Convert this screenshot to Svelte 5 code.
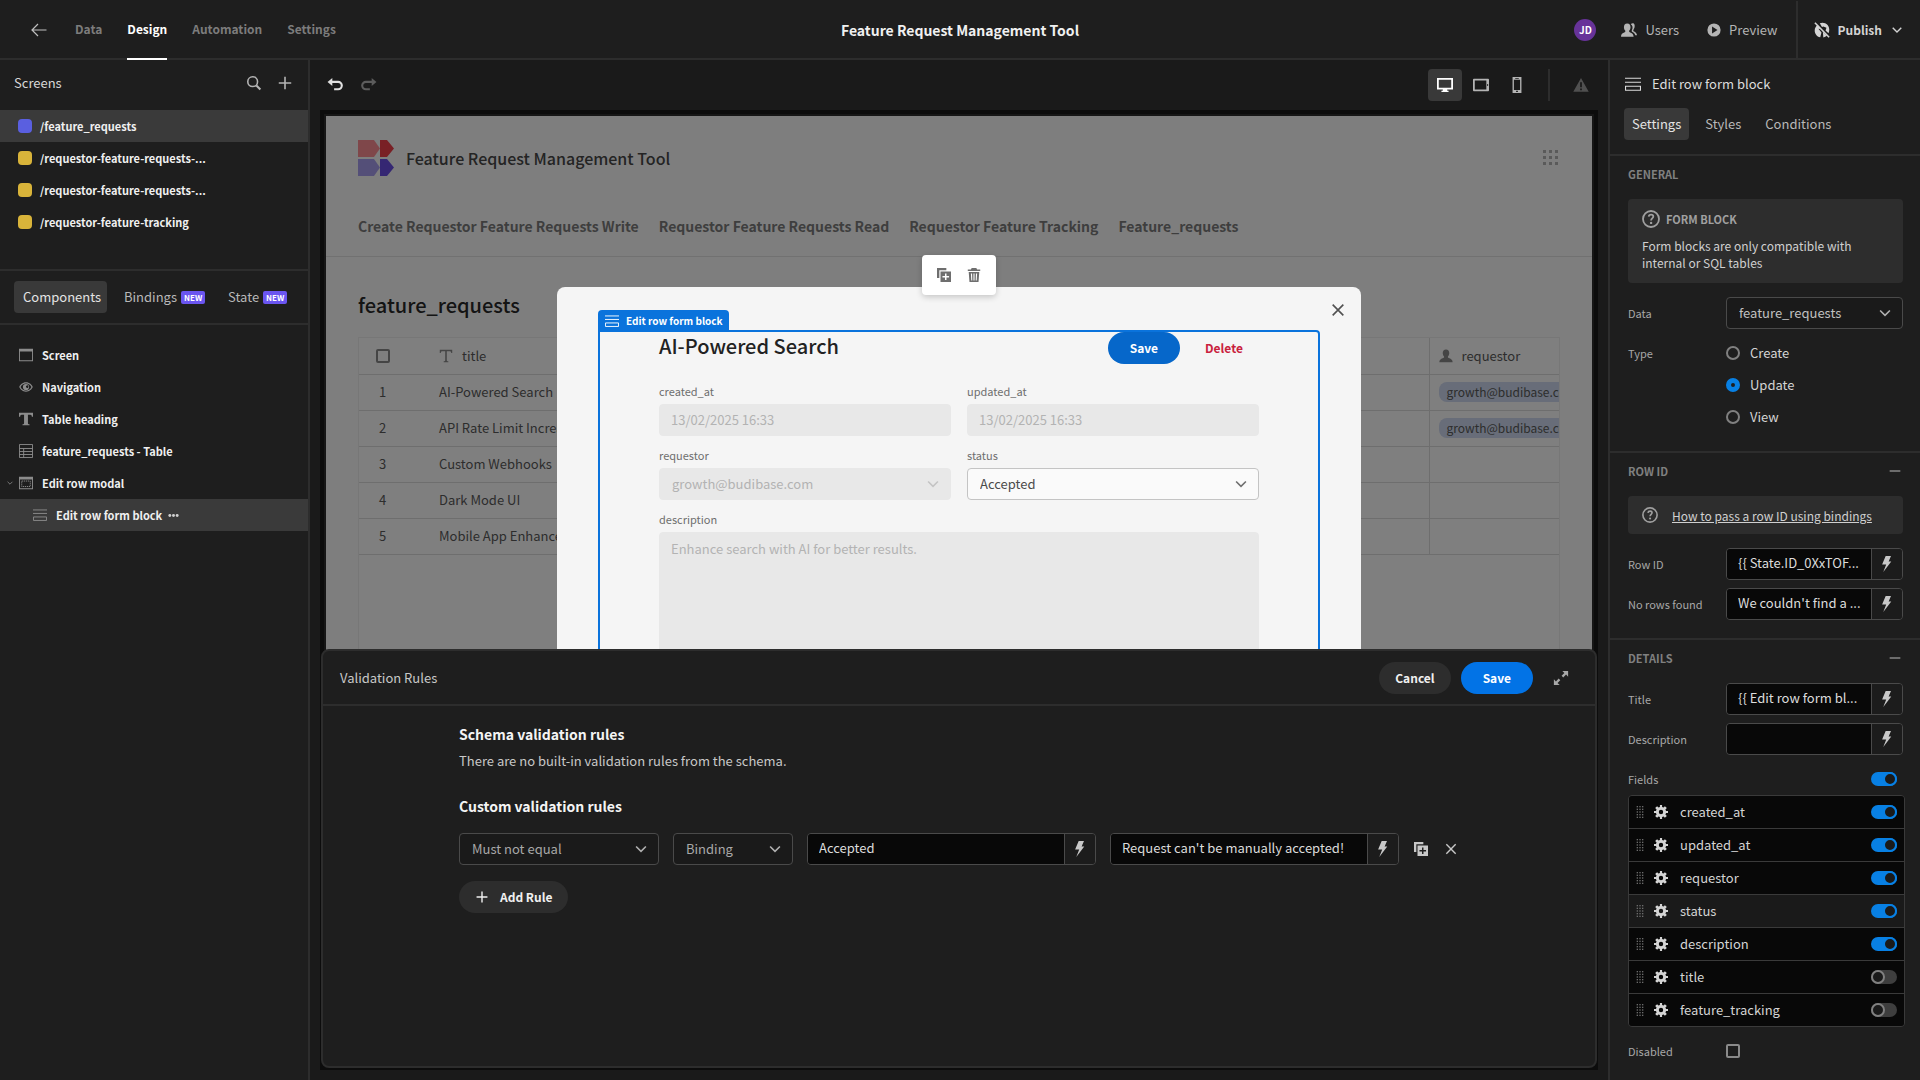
<script>
  const tabs = ["Data", "Design", "Automation", "Settings"];

  const screens = [
    { route: "/feature_requests", color: "#5a5fe0", selected: true },
    { route: "/requestor-feature-requests-...", color: "#d9b43a" },
    { route: "/requestor-feature-requests-...", color: "#d9b43a" },
    { route: "/requestor-feature-tracking", color: "#d9b43a" },
  ];

  const tree = [
    { name: "Screen", icon: "screen" },
    { name: "Navigation", icon: "eye" },
    { name: "Table heading", icon: "text" },
    { name: "feature_requests - Table", icon: "table" },
    { name: "Edit row modal", icon: "modal", open: true },
    { name: "Edit row form block", icon: "form", child: true },
  ];

  const links = [
    "Create Requestor Feature Requests Write",
    "Requestor Feature Requests Read",
    "Requestor Feature Tracking",
    "Feature_requests",
  ];

  const rows = [
    { title: "AI-Powered Search", requestor: "growth@budibase.com" },
    { title: "API Rate Limit Increase", requestor: "growth@budibase.com" },
    { title: "Custom Webhooks" },
    { title: "Dark Mode UI" },
    { title: "Mobile App Enhancements" },
  ];

  let fields = $state([
    { name: "created_at", on: true },
    { name: "updated_at", on: true },
    { name: "requestor", on: true },
    { name: "status", on: true, hover: true },
    { name: "description", on: true },
    { name: "title", on: false },
    { name: "feature_tracking", on: false },
  ]);

  let allFields = $state(true);
  let type = $state("Update");
  let rowId = $state("{{ State.ID_0XxTOF...");
  let noRows = $state("We couldn't find a ...");
  let title = $state("{{ Edit row form bl...");
  let description = $state("");
  let ruleValue = $state("Accepted");
  let ruleError = $state("Request can't be manually accepted!");
</script>

{#snippet icon(name, size = 18)}
  <svg class="icon" width={size} height={size} viewBox="0 0 18 18" aria-hidden="true">
    {#if name === "back"}
      <path class="line" d="M16.5 9H2M8 3L2 9l6 6" />
    {:else if name === "search"}
      <circle class="line thick" cx="7.5" cy="7.5" r="5.5" />
      <path class="line heavy" d="M11.7 11.7l4.5 4.5" />
    {:else if name === "plus"}
      <path class="line thick" d="M9 2v14M2 9h14" />
    {:else if name === "minus"}
      <path class="line thick" d="M3 9h12" />
    {:else if name === "close"}
      <path class="line thick" d="M3 3l12 12M15 3L3 15" />
    {:else if name === "chevron"}
      <path class="line thick" d="M3.5 6.2L9 11.7l5.500-5.500" />
    {:else if name === "undo"}
      <path d="M6 1L.6 5.500 6 10z" />
      <path class="line heavy" d="M5 5.500h7.500a3.900 3.900 0 0 1 0 8.300H8" />
    {:else if name === "redo"}
      <path d="M12 1l5.400 4.500L12 10z" />
      <path class="line heavy" d="M13 5.500H5.500a3.900 3.900 0 0 0 0 8.300H10" />
    {:else if name === "desktop"}
      <path fill-rule="evenodd" d="M0 1h18v13h-6.500v1.500H13V17H5v-1.500h1.500V14H0zM2 3v9h14V3z" />
    {:else if name === "tablet"}
      <path fill-rule="evenodd" d="M1 2h16a1 1 0 0 1 1 1v12a1 1 0 0 1-1 1H1a1 1 0 0 1-1-1V3a1 1 0 0 1 1-1zM2 4v10h13V4zM16 8v2h1V8z" />
    {:else if name === "phone"}
      <path fill-rule="evenodd" d="M4 0h10v18H4zM5.500 3v11.500h7V3zM7 1v1h4V1zM8 15.500v1.300h2v-1.300z" />
    {:else if name === "alert"}
      <path fill-rule="evenodd" d="M9 1l8.700 15.500H.3zM8 6v5.500h2V6zM8 13v2h2v-2z" />
    {:else if name === "users"}
      <path d="M11 2.600c1-1.500 2.400-1.600 3.400-.8 1.300 1 1.500 4.200-.2 6.500-.7 1-.3 1.800.5 2.300 1.500.9 3.300 1.800 3.300 4.400h-2c-.3-2-1.400-2.700-3.600-4-.5-.4-.6-.9-.2-1.600C13.800 6.300 13 3.800 11 2.600z" />
      <path d="M7 1.800c2.600 0 3.700 1.800 3.700 4 0 1.500-.6 2.900-1.400 3.800-.5.7-.2 1.500.6 1.800 2.600 1 4.100 1.700 4.300 5.100H0c0-3.400 1.600-4.100 4.200-5.100.7-.3 1-1.100.5-1.800C3.900 8.700 3.300 7.300 3.300 5.800c0-2.200 1.100-4 3.700-4z" />
    {:else if name === "user"}
      <path d="M9 .5c2.800 0 4.200 2 4.200 4.600 0 1.600-.6 3.200-1.500 4.300-.6.800-.3 1.800.6 2.100 3 1.100 5.200 1.800 5.200 5.500H.5c0-3.700 2.200-4.400 5.200-5.500.9-.3 1.200-1.300.6-2.100C5.400 8.300 4.800 6.700 4.800 5.100 4.800 2.500 6.200.5 9 .5z" />
    {:else if name === "play"}
      <path fill-rule="evenodd" d="M9 .5a8.500 8.500 0 1 0 0 17 8.500 8.500 0 0 0 0-17zM6.500 4.500l7 4.500-7 4.500z" />
    {:else if name === "globe"}
      <path d="M4 3.500L8 8l-3-.3 3.400 4L7 17.200C3 16.500.8 13 .8 9.500c0-2.200 1.200-4.500 3.200-6z" />
      <path d="M6.500 1.500C9.500.3 13 1 15.300 3.500c2.400 2.900 2.300 6.500 1 9.200L13 9.500l1-3-3.500-1.300L9 5.500z" />
      <path d="M10 11l4.500 4.500c-1.200 1-2.500 1.600-4 1.800z" />
      <path class="line thick" d="M1 .8l16 16.400" />
    {:else if name === "screen"}
      <path fill-rule="evenodd" d="M0 1h18v16H0zM1.200 4.500v11.300h15.600V4.500z" />
    {:else if name === "modal"}
      <path fill-rule="evenodd" d="M0 1h18v16H0zM1.200 4.500v11.300h15.600V4.500z" />
      <rect class="line" x="3.500" y="6.500" width="11" height="7" stroke-dasharray="1.600 1" />
    {:else if name === "eye"}
      <path fill-rule="evenodd" d="M9 3c4.500 0 7.500 3.300 8.700 6-1.200 2.700-4.200 6-8.700 6S1.500 11.700.3 9C1.500 6.300 4.500 3 9 3zm0 1.500c-1 0-5 .3-7 4.500 2 4.200 6 4.500 7 4.500s5-.3 7-4.500C14 4.800 10 4.500 9 4.500z" />
      <path fill-rule="evenodd" d="M9 5a4 4 0 1 0 0 8 4 4 0 0 0 0-8zm1 2a1.600 1.600 0 1 1-.1 3A1.600 1.600 0 0 1 10 7z" />
    {:else if name === "text"}
      <path d="M0 1h18v5h-1.500c0-1.600-.6-2.500-2-2.500H11.500v11c0 1 .6 1.300 2 1.300V17h-9v-1.200c1.400 0 2-.3 2-1.300v-11H3.500c-1.400 0-2 .9-2 2.500H0z" />
    {:else if name === "type"}
      <path d="M1 1h16v4h-1.300c0-1.500-.7-2.200-2-2.200H10v11.700c0 .9.600 1.200 2 1.200V17H6v-1.300c1.400 0 2-.3 2-1.200V2.800H4.300c-1.300 0-2 .7-2 2.200H1z" />
    {:else if name === "table"}
      <path class="line" d="M.6.600h16.800v16.800H.6zM.6 5.800h16.800M.6 9.700h16.800M.6 13.500h16.800M6 5.800v11.600" />
    {:else if name === "form"}
      <path class="line" d="M0 2.500h18M0 7h18M.6 11.500h16.800V16H.6z" />
    {:else if name === "help"}
      <circle class="line thick" cx="9" cy="9" r="8" />
      <path class="line thick" d="M6.700 6.600c.2-1.500 1.200-2 2.400-2 1.300 0 2.200.8 2.200 1.900 0 1.800-2.200 1.900-2.200 3.900" />
      <circle cx="9.100" cy="12.900" r="1.200" />
    {:else if name === "bolt"}
      <path d="M7.500 0h6l-2.700 6.300h3L4.800 18l3.300-8.400H3.500z" />
    {:else if name === "gear"}
      <path fill-rule="evenodd" d="M7.600 0h2.800v2.500l1.900.8L14 1.500 16.500 4l-1.800 1.700.8 1.900H18v2.800h-2.500l-.8 1.900 1.800 1.700-2.500 2.500-1.700-1.800-1.900.8V18H7.600v-2.500l-1.900-.8L4 16.500 1.500 14l1.800-1.700-.8-1.900H0V7.600h2.500l.8-1.900L1.500 4 4 1.500l1.700 1.800 1.900-.8zM9 6.200a2.800 2.800 0 1 0 0 5.600 2.800 2.800 0 0 0 0-5.600z" />
    {:else if name === "grip"}
      {#each [1, 5, 9, 13, 17] as y}
        <rect x="4" y={y - 1} width="2" height="2" /><rect x="8" y={y - 1} width="2" height="2" /><rect x="12" y={y - 1} width="2" height="2" />
      {/each}
    {:else if name === "apps"}
      {#each [1, 7, 13] as y}
        <rect x="1" {y} width="3" height="3" /><rect x="7" {y} width="3" height="3" /><rect x="13" {y} width="3" height="3" />
      {/each}
    {:else if name === "dots"}
      <circle cx="3" cy="9" r="2.400" /><circle cx="9" cy="9" r="2.400" /><circle cx="15" cy="9" r="2.400" />
    {:else if name === "duplicate"}
      <path d="M0 0h12v3H3v10H0z" />
      <path fill-rule="evenodd" d="M4.500 4.500H18V18H4.500zM10.300 7v3.300H7v1.900h3.300v3.300h1.900v-3.300h3.300v-1.900h-3.300V7z" />
    {:else if name === "trash"}
      <path fill-rule="evenodd" d="M6 0h6l1 2h4v2H1V2h4zM2.200 5h13.600l-1 13H3.200zM5 7l.5 9h1.300L6.500 7zM8.300 7v9h1.400V7zM11.500 7l-.3 9h1.300l.5-9z" />
    {:else if name === "expand"}
      <path d="M10.500 1H17v6.500l-2.300-2.300L11.500 8.400 9.700 6.600 12.800 3.300zM7.500 17H1v-6.500l2.300 2.300L6.400 9.700l1.800 1.800-3.100 3.100z" />
    {/if}
  </svg>
{/snippet}

<div class="app">
  <header class="top">
    <nav class="top-nav">
      <button class="bare back" aria-label="Back">{@render icon("back", 18)}</button>
      {#each tabs as tab}
        <a href="#{tab}" class="top-tab" class:active={tab === "Design"}>{tab}</a>
      {/each}
    </nav>
    <h1>Feature Request Management Tool</h1>
    <div class="top-right">
      <span class="avatar">JD</span>
      <button class="bare action">{@render icon("users", 16)} Users</button>
      <button class="bare action">{@render icon("play", 14)} Preview</button>
      <button class="bare publish">
        {@render icon("globe", 16)} Publish {@render icon("chevron", 14)}
      </button>
    </div>
  </header>

  <div class="body">
    <aside class="left">
      <section class="screens">
        <div class="panel-head">
          <h2>Screens</h2>
          <button class="bare" aria-label="Search screens">{@render icon("search", 16)}</button>
          <button class="bare" aria-label="Add screen">{@render icon("plus", 16)}</button>
        </div>
        {#each screens as screen}
          <a class="nav-row" class:selected={screen.selected} href="#{screen.route}">
            <span class="swatch" style:background={screen.color}></span>
            <span>{screen.route}</span>
          </a>
        {/each}
      </section>
      <div class="pills left-pills">
        <button class="pill active">Components</button>
        <button class="pill">Bindings <span class="badge">NEW</span></button>
        <button class="pill">State <span class="badge">NEW</span></button>
      </div>
      <div class="tree">
        {#each tree as node}
          <a class="nav-row node" class:child={node.child} class:selected={node.child} href="#{node.name}">
            <span class="arrow">{#if node.open}{@render icon("chevron", 8)}{/if}</span>
            {@render icon(node.icon, 14)}
            <span>{node.name}</span>
            {#if node.child}<span class="more">{@render icon("dots", 11)}</span>{/if}
          </a>
        {/each}
      </div>
    </aside>

    <main class="center">
      <div class="toolbar">
        <button class="bare undo" aria-label="Undo">{@render icon("undo", 16)}</button>
        <button class="bare redo" aria-label="Redo">{@render icon("redo", 16)}</button>
        <span class="spacer"></span>
        <button class="device active" aria-label="Desktop">{@render icon("desktop", 16)}</button>
        <button class="device" aria-label="Tablet">{@render icon("tablet", 16)}</button>
        <button class="device" aria-label="Mobile">{@render icon("phone", 16)}</button>
        <span class="rule"></span>
        <button class="bare alert" aria-label="Errors">{@render icon("alert", 16)}</button>
      </div>

      <div class="frame">
        <div class="page">
          <div class="page-top">
            <div class="brand">
              <svg width="36" height="36" viewBox="0 0 36 36" aria-hidden="true">
                <path fill="#ff8389" opacity=".9" d="M0 0h16l6 8.500-6 8.500H0z" />
                <path fill="#f2414b" d="M22 0h7l7 8.500-7 8.500h-7z" />
                <path fill="#a99ff0" d="M0 19h16l6 8.500-6 8.500H0z" />
                <path fill="#6a4fe6" d="M22 19h7l7 8.500-7 8.500h-7z" />
              </svg>
              <span>Feature Request Management Tool</span>
              <span class="apps">{@render icon("apps", 18)}</span>
            </div>
            <nav class="links">
              {#each links as link}
                <a href="#{link}">{link}</a>
              {/each}
            </nav>
          </div>
          <div class="page-body">
            <h2>feature_requests</h2>
            <div class="grid">
              <table>
                <colgroup>
                  <col class="col-num" />
                  <col class="col-title" />
                  <col />
                  <col class="col-user" />
                </colgroup>
                <thead>
                  <tr>
                    <th class="num"><input type="checkbox" class="box" aria-label="Select all" /></th>
                    <th><span class="th">{@render icon("type", 14)} title</span></th>
                    <th></th>
                    <th class="user"><span class="th">{@render icon("user", 14)} requestor</span></th>
                  </tr>
                </thead>
                <tbody>
                  {#each rows as row, i}
                    <tr>
                      <td class="num">{i + 1}</td>
                      <td>{row.title}</td>
                      <td></td>
                      <td class="user">{#if row.requestor}<span class="chip">{row.requestor}</span>{/if}</td>
                    </tr>
                  {/each}
                </tbody>
              </table>
            </div>
          </div>

          <div class="overlay">
            <div class="modal" role="dialog" aria-label="Edit row modal">
              <div class="float-bar">
                <button class="bare" aria-label="Duplicate">{@render icon("duplicate", 14)}</button>
                <button class="bare" aria-label="Delete component">{@render icon("trash", 14)}</button>
              </div>
              <button class="bare modal-close" aria-label="Close">{@render icon("close", 16)}</button>
              <div class="block">
                <div class="block-label">{@render icon("form", 14)} Edit row form block</div>
                <div class="form-head">
                  <h3>AI-Powered Search</h3>
                  <button class="btn cta-light">Save</button>
                  <button class="btn delete">Delete</button>
                </div>
                <div class="form">
                  <div class="field">
                    <label for="created">created_at</label>
                    <input id="created" value="13/02/2025 16:33" disabled />
                  </div>
                  <div class="field">
                    <label for="updated">updated_at</label>
                    <input id="updated" value="13/02/2025 16:33" disabled />
                  </div>
                  <div class="field">
                    <label for="requestor">requestor</label>
                    <span class="select">
                      <select id="requestor" disabled><option>growth@budibase.com</option></select>
                      {@render icon("chevron", 16)}
                    </span>
                  </div>
                  <div class="field">
                    <label for="status">status</label>
                    <span class="select">
                      <select id="status"><option>Accepted</option></select>
                      {@render icon("chevron", 16)}
                    </span>
                  </div>
                  <div class="field wide">
                    <label for="desc">description</label>
                    <textarea id="desc" disabled>Enhance search with AI for better results.</textarea>
                  </div>
                </div>
              </div>
            </div>
          </div>
        </div>

        <section class="drawer">
          <div class="drawer-head">
            <span>Validation Rules</span>
            <button class="btn quiet">Cancel</button>
            <button class="btn cta">Save</button>
            <button class="bare" aria-label="Expand">{@render icon("expand", 16)}</button>
          </div>
          <div class="drawer-body">
            <h4>Schema validation rules</h4>
            <p>There are no built-in validation rules from the schema.</p>
            <h4>Custom validation rules</h4>
            <div class="rule-row">
              <span class="select dark">
                <select aria-label="Constraint"><option>Must not equal</option></select>
                {@render icon("chevron", 16)}
              </span>
              <span class="select dark">
                <select aria-label="Value type"><option>Binding</option></select>
                {@render icon("chevron", 16)}
              </span>
              <div class="bindable">
                <input aria-label="Value" bind:value={ruleValue} />
                <button aria-label="Open bindings">{@render icon("bolt", 16)}</button>
              </div>
              <div class="bindable">
                <input aria-label="Error message" bind:value={ruleError} />
                <button aria-label="Open bindings">{@render icon("bolt", 16)}</button>
              </div>
              <button class="bare" aria-label="Duplicate rule">{@render icon("duplicate", 14)}</button>
              <button class="bare" aria-label="Remove rule">{@render icon("close", 14)}</button>
            </div>
            <button class="btn quiet add">{@render icon("plus", 14)} Add Rule</button>
          </div>
        </section>
      </div>
    </main>

    <aside class="right">
      <div class="right-head">
        <h2>{@render icon("form", 16)} Edit row form block</h2>
        <div class="pills">
          <button class="pill active">Settings</button>
          <button class="pill">Styles</button>
          <button class="pill">Conditions</button>
        </div>
      </div>

      <section class="group">
        <h3>GENERAL</h3>
        <div class="info">
          <strong>{@render icon("help", 18)} FORM BLOCK</strong>
          <p>Form blocks are only compatible with internal or SQL tables</p>
        </div>
        <div class="setting">
          <label for="data">Data</label>
          <span class="select dark bright">
            <select id="data"><option>feature_requests</option></select>
            {@render icon("chevron", 16)}
          </span>
        </div>
        <div class="setting top-label">
          <span class="label">Type</span>
          <div class="radios">
            {#each ["Create", "Update", "View"] as option}
              <label><input type="radio" name="type" value={option} bind:group={type} /> {option}</label>
            {/each}
          </div>
        </div>
      </section>

      <section class="group">
        <h3>ROW ID <button class="bare" aria-label="Collapse row ID">{@render icon("minus", 16)}</button></h3>
        <div class="info link">
          {@render icon("help", 16)}
          <a href="#docs">How to pass a row ID using bindings</a>
        </div>
        <div class="setting">
          <label for="row-id">Row ID</label>
          <div class="bindable">
            <input id="row-id" bind:value={rowId} />
            <button aria-label="Open bindings">{@render icon("bolt", 16)}</button>
          </div>
        </div>
        <div class="setting">
          <label for="no-rows">No rows found</label>
          <div class="bindable">
            <input id="no-rows" bind:value={noRows} />
            <button aria-label="Open bindings">{@render icon("bolt", 16)}</button>
          </div>
        </div>
      </section>

      <section class="group">
        <h3>DETAILS <button class="bare" aria-label="Collapse details">{@render icon("minus", 16)}</button></h3>
        <div class="setting">
          <label for="title">Title</label>
          <div class="bindable">
            <input id="title" bind:value={title} />
            <button aria-label="Open bindings">{@render icon("bolt", 16)}</button>
          </div>
        </div>
        <div class="setting">
          <label for="description">Description</label>
          <div class="bindable">
            <input id="description" bind:value={description} />
            <button aria-label="Open bindings">{@render icon("bolt", 16)}</button>
          </div>
        </div>
        <div class="fields-head">
          <label for="all-fields">Fields</label>
          <input id="all-fields" type="checkbox" role="switch" class="switch" bind:checked={allFields} />
        </div>
        <ul class="fields">
          {#each fields as field}
            <li class:hover={field.hover}>
              <span class="grip">{@render icon("grip", 12)}</span>
              <button class="bare" aria-label="Edit {field.name}">{@render icon("gear", 14)}</button>
              <label for="field-{field.name}">{field.name}</label>
              <input id="field-{field.name}" type="checkbox" role="switch" class="switch" bind:checked={field.on} />
            </li>
          {/each}
        </ul>
        <div class="setting">
          <label for="disabled">Disabled</label>
          <input id="disabled" type="checkbox" class="box" />
        </div>
      </section>
    </aside>
  </div>
</div>

<style>
  :global(body) {
    background: #1a1a1a;
  }

  .app {
    display: flex;
    flex-direction: column;
    height: 100vh;
    font-family: "Noto Sans CJK KR", "Noto Sans", sans-serif;
    font-size: 13px;
    line-height: 16px;
    color: #c8c8c8;
    background: #1e1e1e;
    overflow: hidden;
  }

  .app * {
    box-sizing: border-box;
  }

  h1, h2, h3, h4, p, ul {
    margin: 0;
    padding: 0;
    font-weight: 400;
    font-size: 13px;
  }

  a {
    color: inherit;
    text-decoration: none;
  }

  button, input, select, textarea {
    font: inherit;
    color: inherit;
    margin: 0;
    min-width: 0;
  }

  .icon {
    display: block;
    flex: none;
    fill: currentColor;
  }

  .line {
    fill: none;
    stroke: currentColor;
    stroke-width: 1.2;
  }

  .thick {
    stroke-width: 1.8;
  }

  .heavy {
    stroke-width: 2.4;
  }

  .bare {
    display: flex;
    align-items: center;
    padding: 0;
    border: none;
    background: none;
  }

  /* top bar */
  .top {
    display: grid;
    grid-template-columns: 1fr auto 1fr;
    align-items: center;
    height: 60px;
    flex: none;
    border-bottom: 2px solid #2d2d2d;
  }

  .top-nav {
    display: flex;
    align-items: center;
    gap: 25px;
    padding-left: 30px;
  }

  .back {
    margin-right: 2px;
    color: #c0c0c0;
  }

  .top-tab {
    display: flex;
    align-items: center;
    height: 60px;
    border-bottom: 2px solid transparent;
    font-size: 12px;
    font-weight: 700;
    color: #7c7c7c;
  }

  .top-tab.active {
    color: #fff;
    border-color: #fff;
  }

  .top h1 {
    font-size: 14px;
    font-weight: 700;
    color: #f0f0f0;
  }

  .top-right {
    display: flex;
    align-items: center;
    justify-content: flex-end;
    height: 58px;
  }

  .avatar {
    width: 22px;
    height: 22px;
    border-radius: 50%;
    background: #673399;
    color: #fff;
    font-size: 10px;
    font-weight: 700;
    line-height: 22px;
    text-align: center;
    margin-right: 25px;
  }

  .action {
    gap: 8px;
    margin-right: 28px;
    color: #b4b4b4;
  }

  .action + .action {
    margin-right: 18px;
  }

  .publish {
    gap: 8px;
    height: 58px;
    padding: 0 16px;
    border-left: 2px solid #2d2d2d;
    font-size: 12px;
    font-weight: 700;
    color: #d4d4d4;
  }

  .body {
    display: flex;
    flex: 1;
    min-height: 0;
  }

  /* left panel */
  .left {
    width: 310px;
    flex: none;
    border-right: 2px solid #2d2d2d;
  }

  .screens {
    height: 211px;
    border-bottom: 2px solid #2d2d2d;
  }

  .panel-head {
    display: flex;
    align-items: center;
    gap: 15px;
    height: 50px;
    padding: 0 15px 4px 14px;
    color: #b4b4b4;
  }

  .panel-head h2 {
    flex: 1;
    color: #d8d8d8;
  }

  .nav-row {
    display: flex;
    align-items: center;
    gap: 8px;
    height: 32px;
    padding-left: 18px;
    font-size: 11px;
    font-weight: 700;
    color: #f0f0f0;
  }

  .nav-row.selected {
    background: #3a3a3a;
  }

  .swatch {
    width: 14px;
    height: 14px;
    border-radius: 4px;
  }

  .pills {
    display: flex;
    gap: 8px;
  }

  .pill {
    display: flex;
    align-items: center;
    gap: 4px;
    height: 32px;
    padding: 0 8px;
    border: none;
    border-radius: 4px;
    background: none;
    color: #b8b8b8;
  }

  .pill.active {
    background: #393939;
    color: #e4e4e4;
  }

  .left-pills {
    padding: 10px 14px;
    border-bottom: 2px solid #2d2d2d;
  }

  .left-pills .pill {
    padding: 0 9px;
  }

  .badge {
    padding: 0 3px;
    border-radius: 2px;
    background: #6a55f0;
    color: #fff;
    font-size: 8px;
    font-weight: 700;
    line-height: 13px;
  }

  .tree {
    padding-top: 14px;
  }

  .node {
    gap: 9px;
    padding-left: 0;
  }

  .node > .icon {
    color: #8c8c8c;
  }

  .arrow {
    display: flex;
    justify-content: flex-end;
    width: 14px;
    margin-right: -4px;
    color: #8c8c8c;
  }

  .node.child {
    padding-left: 14px;
  }

  .more {
    margin-left: -3px;
    color: #d0d0d0;
  }

  /* canvas */
  .center {
    display: flex;
    flex-direction: column;
    flex: 1;
    min-width: 0;
    padding: 0 10px 10px;
    background: #1a1a1a;
  }

  .toolbar {
    display: flex;
    align-items: center;
    height: 50px;
    flex: none;
    padding: 0 9px 0 7px;
  }

  .undo {
    color: #e0e0e0;
    margin-right: 18px;
  }

  .redo {
    color: #5c5c5c;
  }

  .spacer {
    flex: 1;
  }

  .device {
    display: flex;
    align-items: center;
    justify-content: center;
    width: 34px;
    height: 32px;
    margin-right: 2px;
    padding: 0;
    border: none;
    border-radius: 4px;
    background: none;
    color: #b4b4b4;
  }

  .device.active {
    background: #393939;
    color: #fff;
  }

  .rule {
    width: 2px;
    height: 32px;
    margin: 0 23px 0 12px;
    background: #2d2d2d;
  }

  .alert {
    color: #505050;
  }

  .frame {
    position: relative;
    flex: 1;
    min-height: 0;
    padding: 4px;
    background: #0c0c0c;
  }

  .page {
    position: relative;
    display: flex;
    flex-direction: column;
    height: 100%;
    border: 2px solid #161616;
    background: #fdfdfd;
    overflow: hidden;
  }

  .page-top {
    padding: 24px 32px 0;
    border-bottom: 1px solid #e2e2e2;
  }

  .brand {
    display: flex;
    align-items: center;
    gap: 12px;
    font-size: 16px;
    font-weight: 500;
    color: #484848;
  }

  .apps {
    margin-left: auto;
    color: #b4b4b4;
  }

  .links {
    display: flex;
    gap: 20px;
    padding: 38px 0 18px;
    font-size: 14px;
    line-height: 24px;
    font-weight: 700;
    color: #7c7c7c;
  }

  .page-body {
    display: flex;
    flex-direction: column;
    flex: 1;
    padding: 32px 32px 0;
  }

  .page-body h2 {
    font-size: 20px;
    line-height: 32px;
    font-weight: 500;
    color: #282828;
  }

  .grid {
    flex: 1;
    margin-top: 16px;
    border: 1px solid #eee;
    background: #fff;
    overflow: hidden;
  }

  table {
    width: calc(100% + 70px);
    table-layout: fixed;
    border-collapse: collapse;
    color: #5a5a5a;
  }

  th, td {
    height: 36px;
    padding: 0 10px;
    border-bottom: 1px solid #ddd;
    font-weight: 400;
    text-align: left;
    white-space: nowrap;
  }

  .col-num {
    width: 70px;
  }

  .col-title {
    width: 200px;
  }

  .col-user {
    width: 200px;
  }

  .num {
    padding-left: 17px;
  }

  td.num {
    padding-left: 20px;
  }

  .user {
    padding-left: 9px;
    border-left: 1px solid #ddd;
  }

  .th {
    display: flex;
    align-items: center;
    gap: 9px;
  }

  .th .icon {
    color: #8a8a8a;
  }

  .chip {
    display: inline-block;
    padding: 0 8px;
    border-radius: 8px;
    background: #d0daf2;
    font-size: 12px;
    line-height: 20px;
  }

  .box {
    display: block;
    appearance: none;
    width: 14px;
    height: 14px;
    border: 2px solid #8a8a8a;
    border-radius: 2px;
  }

  .overlay {
    position: absolute;
    inset: 0;
    display: flex;
    justify-content: center;
    padding-top: 171px;
    background: rgba(0, 0, 0, 0.5);
  }

  .modal {
    position: relative;
    width: 804px;
    padding: 43px 41px 0;
    border-radius: 8px;
    background: #f5f5f5;
    color: #4b4b4b;
  }

  .float-bar {
    position: absolute;
    top: -32px;
    left: 50%;
    display: flex;
    align-items: center;
    gap: 16px;
    height: 40px;
    padding: 0 15px;
    margin-left: -37px;
    border-radius: 4px;
    background: #fff;
    color: #6e6e6e;
    box-shadow: 0 2px 6px rgba(0, 0, 0, 0.2);
  }

  .modal-close {
    position: absolute;
    top: 15px;
    right: 15px;
    color: #505050;
  }

  .block {
    position: relative;
    height: 100%;
    padding: 0 59px;
    border: 2px solid #0a73dc;
    border-radius: 0 4px 0 0;
  }

  .block-label {
    position: absolute;
    left: -2px;
    bottom: 100%;
    display: flex;
    align-items: center;
    gap: 7px;
    height: 22px;
    padding: 0 6px 0 7px;
    border-radius: 4px 4px 0 0;
    background: #0a73dc;
    color: #fff;
    font-size: 10px;
    font-weight: 700;
    white-space: nowrap;
  }

  .form-head {
    display: flex;
    align-items: flex-start;
  }

  .form-head h3 {
    flex: 1;
    font-size: 20px;
    line-height: 28px;
    font-weight: 500;
    color: #222;
  }

  .btn {
    display: flex;
    align-items: center;
    height: 32px;
    padding: 0 16px;
    border: none;
    border-radius: 16px;
    font-size: 12px;
    font-weight: 700;
    color: #fff;
  }

  .cta-light {
    padding: 0 22px;
    background: #0667ca;
  }

  .delete {
    margin-left: 9px;
    background: none;
    color: #c9213d;
  }

  .form {
    display: grid;
    grid-template-columns: 1fr 1fr;
    gap: 8px 16px;
    margin-top: 16px;
  }

  .field label {
    display: block;
    padding-bottom: 2px;
    font-size: 11px;
    line-height: 22px;
    color: #6e6e6e;
  }

  .field.wide {
    grid-column: span 2;
  }

  .field input, .field select, .field textarea {
    display: block;
    width: 100%;
    height: 32px;
    padding: 0 11px 2px;
    border: 1px solid #c4c4c4;
    border-radius: 4px;
    background: #fafafa;
    color: #4b4b4b;
    appearance: none;
    opacity: 1;
  }

  .field select {
    padding: 0 12px;
  }

  .field textarea {
    height: 160px;
    padding: 8px 11px;
    resize: none;
  }

  .field input:disabled, .field select:disabled, .field textarea:disabled {
    border-color: #e8e8e8;
    background: #e8e8e8;
    color: #b3b3b3;
  }

  .select {
    position: relative;
    display: block;
  }

  .select .icon {
    position: absolute;
    top: 8px;
    right: 10px;
    pointer-events: none;
    color: #6e6e6e;
  }

  .select select:disabled + .icon {
    color: #c4c4c4;
  }

  .dark select {
    width: 100%;
    height: 32px;
    padding: 0 12px;
    border: 1px solid #4a4a4a;
    border-radius: 4px;
    background: #1a1a1a;
    color: #a8a8a8;
    appearance: none;
  }

  .dark.bright select {
    color: #c0c0c0;
  }

  .dark .icon {
    color: #b0b0b0;
  }

  .bindable {
    display: flex;
    height: 32px;
    min-width: 0;
    border: 1px solid #4a4a4a;
    border-radius: 4px;
    overflow: hidden;
  }

  .bindable input {
    flex: 1;
    padding: 0 6px 2px 11px;
    border: none;
    background: #080808;
    color: #dcdcdc;
    text-overflow: ellipsis;
  }

  .bindable button {
    display: flex;
    align-items: center;
    justify-content: center;
    width: 31px;
    padding: 0;
    border: none;
    border-left: 1px solid #4a4a4a;
    background: #1c1c1c;
  }

  /* validation drawer */
  .drawer {
    position: absolute;
    left: 1px;
    right: 1px;
    bottom: 2px;
    height: 419px;
    border: 2px solid #2d2d2d;
    border-radius: 8px;
    background: #1e1e1e;
  }

  .drawer-head {
    display: flex;
    align-items: center;
    gap: 10px;
    height: 55px;
    padding: 0 26px 0 17px;
    border-bottom: 2px solid #2d2d2d;
  }

  .drawer-head span {
    flex: 1;
  }

  .drawer-head .bare {
    margin-left: 10px;
    color: #a8a8a8;
  }

  .quiet {
    background: #2d2d2d;
    color: #f0f0f0;
  }

  .cta {
    padding: 0 22px;
    background: #0273e6;
  }

  .drawer-body {
    max-width: 1000px;
    margin: 0 auto;
    padding-top: 16px;
  }

  .drawer-body h4 {
    font-size: 14px;
    line-height: 24px;
    font-weight: 700;
    color: #f4f4f4;
  }

  .drawer-body p {
    line-height: 24px;
    margin: 3px 0 21px;
  }

  .rule-row {
    display: grid;
    grid-template-columns: 200px 120px 1fr 1fr 16px 16px;
    gap: 14px;
    margin: 15px 0 16px;
  }

  .rule-row .bare {
    justify-content: center;
    height: 32px;
  }

  .add {
    gap: 11px;
  }

  /* settings panel */
  .right {
    width: 312px;
    flex: none;
    border-left: 2px solid #2d2d2d;
  }

  .right-head {
    padding: 16px 14px 14px;
    border-bottom: 2px solid #2d2d2d;
  }

  .right-head h2 {
    display: flex;
    align-items: center;
    gap: 11px;
    margin-bottom: 16px;
    padding-left: 1px;
    color: #dcdcdc;
  }

  .group {
    display: flex;
    flex-direction: column;
    gap: 8px;
    padding: 10px 17px 18px 18px;
    border-bottom: 2px solid #2d2d2d;
  }

  .group:last-child {
    border: none;
  }

  .group h3 {
    display: flex;
    align-items: center;
    justify-content: space-between;
    height: 16px;
    margin-bottom: 9px;
    font-size: 11px;
    font-weight: 700;
    color: #808080;
  }

  .info {
    margin-bottom: 6px;
    padding: 10px 14px 12px;
    border-radius: 4px;
    background: #2d2d2d;
    color: #d0d0d0;
    font-size: 12px;
    line-height: 17px;
  }

  .info p {
    font-size: 12px;
  }

  .info strong {
    display: flex;
    align-items: center;
    gap: 6px;
    height: 20px;
    margin-bottom: 8px;
    font-size: 11px;
    color: #a0a0a0;
  }

  .info.link {
    display: flex;
    align-items: center;
    gap: 14px;
    height: 38px;
    padding: 0 14px;
  }

  .info.link .icon {
    color: #a0a0a0;
  }

  .info a {
    text-decoration: underline;
  }

  .setting {
    display: grid;
    grid-template-columns: 90px 1fr;
    gap: 8px;
    align-items: center;
    min-height: 32px;
  }

  .setting > label, .label, .fields-head label {
    font-size: 11px;
    color: #a8a8a8;
    white-space: nowrap;
  }

  .top-label {
    align-items: start;
  }

  .label {
    line-height: 32px;
  }

  .radios label {
    display: flex;
    align-items: center;
    gap: 10px;
    height: 32px;
    color: #d4d4d4;
  }

  .radios input {
    appearance: none;
    width: 14px;
    height: 14px;
    border: 2px solid #808080;
    border-radius: 50%;
  }

  .radios input:checked {
    border: 5px solid #0880e4;
  }

  .fields-head {
    display: flex;
    align-items: center;
    justify-content: space-between;
    height: 32px;
    padding-right: 6px;
  }

  .switch {
    display: block;
    appearance: none;
    width: 26px;
    height: 14px;
    border-radius: 7px;
    background: #3e3e3e;
  }

  .switch::before {
    content: "";
    display: block;
    width: 14px;
    height: 14px;
    border: 2px solid #808080;
    border-radius: 50%;
    background: #1a1a1a;
    box-sizing: border-box;
  }

  .switch:checked {
    background: #0880e4;
  }

  .switch:checked::before {
    margin-left: auto;
    border-color: #0880e4;
  }

  .fields {
    margin: -8px -2px 0 0;
    border: 1px solid #3a3a3a;
    border-radius: 4px;
    list-style: none;
    overflow: hidden;
  }

  .fields li {
    display: flex;
    align-items: center;
    height: 33px;
    padding: 0 7px 0 5px;
    border-bottom: 1px solid #3a3a3a;
    background: #080808;
    color: #d4d4d4;
  }

  .fields li.hover {
    background: #1a1a1a;
  }

  .fields li:last-child {
    height: 32px;
    border-bottom: none;
  }

  .fields .grip {
    margin-right: 8px;
    color: #6c6c6c;
  }

  .fields label {
    flex: 1;
    margin-left: 12px;
  }
</style>
